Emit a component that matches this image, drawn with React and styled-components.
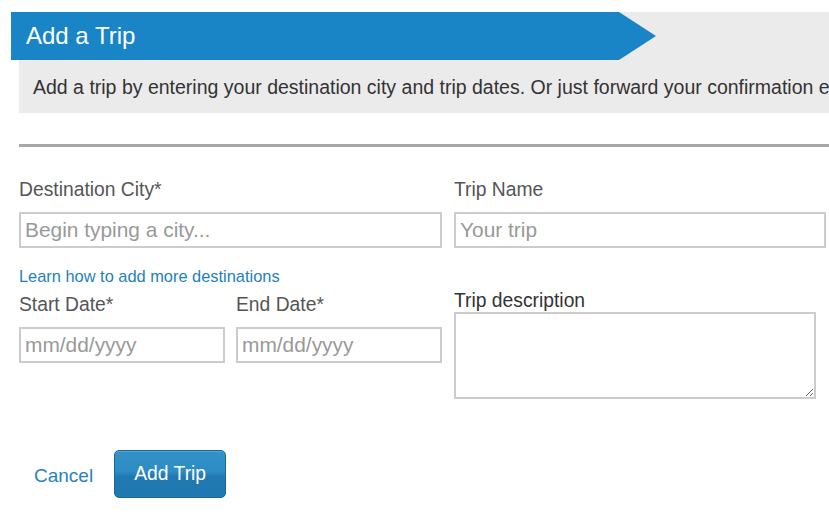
import styled, { createGlobalStyle } from "styled-components";

const GlobalStyle = createGlobalStyle`
  body {
    margin: 0;
    background: #fff;
    font-family: "Liberation Sans", Arial, sans-serif;
  }
`;

function App() {
  return (
    <>
      <GlobalStyle />
      <Page>
        <Intro>
          <Ribbon>
            <h1>Add a Trip</h1>
          </Ribbon>
          <p>
            Add a trip by entering your destination city and trip dates. Or
            just forward your confirmation email
          </p>
        </Intro>
        <Divider />
        <Form>
          <Column>
            <Label>Destination City*</Label>
            <Input placeholder="Begin typing a city..." />
            <HelpLink href="#">Learn how to add more destinations</HelpLink>
            <DateRow>
              <div>
                <Label>Start Date*</Label>
                <Input placeholder="mm/dd/yyyy" />
              </div>
              <div>
                <Label>End Date*</Label>
                <Input placeholder="mm/dd/yyyy" />
              </div>
            </DateRow>
          </Column>
          <Column>
            <Label>Trip Name</Label>
            <Input placeholder="Your trip" />
            <Label $dark $top={42} $gap={0}>
              Trip description
            </Label>
            <TextArea />
          </Column>
        </Form>
        <Actions>
          <CancelLink href="#">Cancel</CancelLink>
          <SubmitButton type="button">Add Trip</SubmitButton>
        </Actions>
      </Page>
    </>
  );
}

const Page = styled.main`
  padding: 12px 0 0 19px;
  overflow: hidden;
  width: 810px;
`;

const Intro = styled.section`
  background: #ebebeb;
  width: 900px;
  padding-bottom: 15px;

  p {
    margin: 16px 0 0 14px;
    font-size: 19.5px;
    line-height: 22px;
    color: #333;
    white-space: nowrap;
  }
`;

const Ribbon = styled.div`
  margin-left: -8px;
  width: 645px;
  height: 48px;
  background: #1a85c6;
  clip-path: polygon(0 0, 608px 0, 100% 50%, 608px 100%, 0 100%);
  display: flex;
  align-items: center;

  h1 {
    margin: 0 0 0 15px;
    font-size: 24px;
    font-weight: normal;
    color: #fff;
  }
`;

const Divider = styled.hr`
  margin: 31px 0 0;
  border: none;
  height: 3px;
  background: #a8a8a8;
  width: 900px;
`;

const Form = styled.div`
  display: grid;
  grid-template-columns: 423px 372px;
  column-gap: 12px;
  margin-top: 32px;
`;

const Column = styled.div`
  display: flex;
  flex-direction: column;
`;

const Label = styled.label`
  display: block;
  font-size: 19.3px;
  line-height: 22px;
  color: ${(p) => (p.$dark ? "#333" : "#555")};
  margin-top: ${(p) => p.$top || 0}px;
  margin-bottom: ${(p) => (p.$gap !== undefined ? p.$gap : 11)}px;
`;

const Input = styled.input`
  box-sizing: border-box;
  width: 100%;
  height: 36px;
  border: 2px solid #ccc;
  padding: 0 4px;
  font-family: inherit;
  font-size: 20.9px;
  color: #333;
  outline: none;

  &::placeholder {
    color: #999;
  }
`;

const HelpLink = styled.a`
  margin-top: 19px;
  font-size: 16.4px;
  line-height: 18px;
  color: #1f7fc0;
  text-decoration: none;
  align-self: flex-start;
`;

const DateRow = styled.div`
  display: grid;
  grid-template-columns: 1fr 1fr;
  column-gap: 11px;
  margin-top: 9px;
`;

const TextArea = styled.textarea`
  box-sizing: border-box;
  width: 362px;
  height: 87px;
  border: 2px solid #ccc;
  font-family: inherit;
  font-size: 18px;
  outline: none;
  resize: both;
`;

const Actions = styled.div`
  display: flex;
  align-items: center;
  gap: 21px;
  margin-top: 51px;
  padding-left: 15px;
`;

const CancelLink = styled.a`
  font-size: 19px;
  color: #2a7fc0;
  text-decoration: none;
  margin-top: 3px;
`;

const SubmitButton = styled.button`
  height: 48px;
  width: 112px;
  border: 1px solid #1b6796;
  border-radius: 5px;
  background: linear-gradient(#3393c9 0%, #2c8cc3 45%, #2179b2 55%, #1f78b1 100%);
  color: #fff;
  font-family: inherit;
  font-size: 19.3px;
  cursor: pointer;
  box-shadow: inset 0 1px 0 rgba(255, 255, 255, 0.15);
`;

export default App;
